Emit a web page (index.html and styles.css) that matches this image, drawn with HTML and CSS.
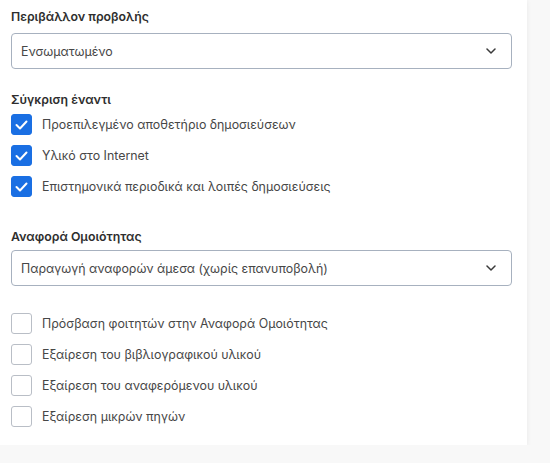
FILE: index.html
```html
<!DOCTYPE html>
<html lang="el">
<head>
<meta charset="utf-8">
<link rel="stylesheet" href="styles.css">
</head>
<body>
<div class="card">
  <div class="section first">
    <div class="label">Περιβάλλον προβολής</div>
    <div class="select">
      <span>Ενσωματωμένο</span>
      <svg class="chev" width="10" height="6" viewBox="0 0 10 6"><path d="M1 1 L5 5 L9 1" fill="none" stroke="#3a3a3a" stroke-width="1.5" stroke-linecap="round" stroke-linejoin="round"/></svg>
    </div>
  </div>
  <div class="section compare">
    <div class="label">Σύγκριση έναντι</div>
    <div class="checks">
      <div class="row"><span class="box on"><svg width="13" height="10" viewBox="0 0 13 10"><path d="M1.5 5 L5 8.5 L11.5 1.5" fill="none" stroke="#fff" stroke-width="2" stroke-linecap="round" stroke-linejoin="round"/></svg></span><span>Προεπιλεγμένο αποθετήριο δημοσιεύσεων</span></div>
      <div class="row"><span class="box on"><svg width="13" height="10" viewBox="0 0 13 10"><path d="M1.5 5 L5 8.5 L11.5 1.5" fill="none" stroke="#fff" stroke-width="2" stroke-linecap="round" stroke-linejoin="round"/></svg></span><span>Υλικό στο Internet</span></div>
      <div class="row"><span class="box on"><svg width="13" height="10" viewBox="0 0 13 10"><path d="M1.5 5 L5 8.5 L11.5 1.5" fill="none" stroke="#fff" stroke-width="2" stroke-linecap="round" stroke-linejoin="round"/></svg></span><span>Επιστημονικά περιοδικά και λοιπές δημοσιεύσεις</span></div>
    </div>
  </div>
  <div class="section report">
    <div class="label">Αναφορά Ομοιότητας</div>
    <div class="select">
      <span>Παραγωγή αναφορών άμεσα (χωρίς επανυποβολή)</span>
      <svg class="chev" width="10" height="6" viewBox="0 0 10 6"><path d="M1 1 L5 5 L9 1" fill="none" stroke="#3a3a3a" stroke-width="1.5" stroke-linecap="round" stroke-linejoin="round"/></svg>
    </div>
  </div>
  <div class="checks options">
    <div class="row"><span class="box"></span><span>Πρόσβαση φοιτητών στην Αναφορά Ομοιότητας</span></div>
    <div class="row"><span class="box"></span><span>Εξαίρεση του βιβλιογραφικού υλικού</span></div>
    <div class="row"><span class="box"></span><span>Εξαίρεση του αναφερόμενου υλικού</span></div>
    <div class="row"><span class="box"></span><span>Εξαίρεση μικρών πηγών</span></div>
  </div>
</div>
</body>
</html>
```

FILE: styles.css
```css
html, body {
  margin: 0;
  padding: 0;
  background: #f8f8f8;
  font-family: Inter, "Noto Sans", sans-serif;
  font-size: 12.4px;
  color: #3b3b3b;
}
.card {
  width: 527px;
  box-sizing: border-box;
  background: #fff;
  padding: 7px 15px 18px 11px;
  box-shadow: 0 1px 5px rgba(0,0,0,0.07);
}
.label {
  font-weight: 600;
  font-size: 12.3px;
  line-height: 20px;
  color: #2e2e2e;
}
.section.first .label { margin-bottom: 6px; }
.section.compare { margin-top: 21px; }
.section.compare .label { margin-bottom: 4px; }
.section.report { margin-top: 30px; }
.section.report .label { margin-bottom: 3px; }
.select {
  height: 36px;
  box-sizing: border-box;
  border: 1px solid #a7b1bf;
  border-radius: 4px;
  display: flex;
  align-items: center;
  justify-content: space-between;
  padding: 0 15px 0 9px;
  color: #474747;
}
.checks {
  display: flex;
  flex-direction: column;
  gap: 10px;
}
.options { margin-top: 27px; }
.row {
  display: flex;
  align-items: center;
  gap: 10px;
  height: 21px;
  color: #474747;
}
.box {
  width: 21px;
  height: 21px;
  box-sizing: border-box;
  border: 1px solid #b9bec6;
  border-radius: 3px;
  display: flex;
  align-items: center;
  justify-content: center;
  flex: none;
}
.box.on {
  background: #1a6fe3;
  border-color: #1a6fe3;
}
```
